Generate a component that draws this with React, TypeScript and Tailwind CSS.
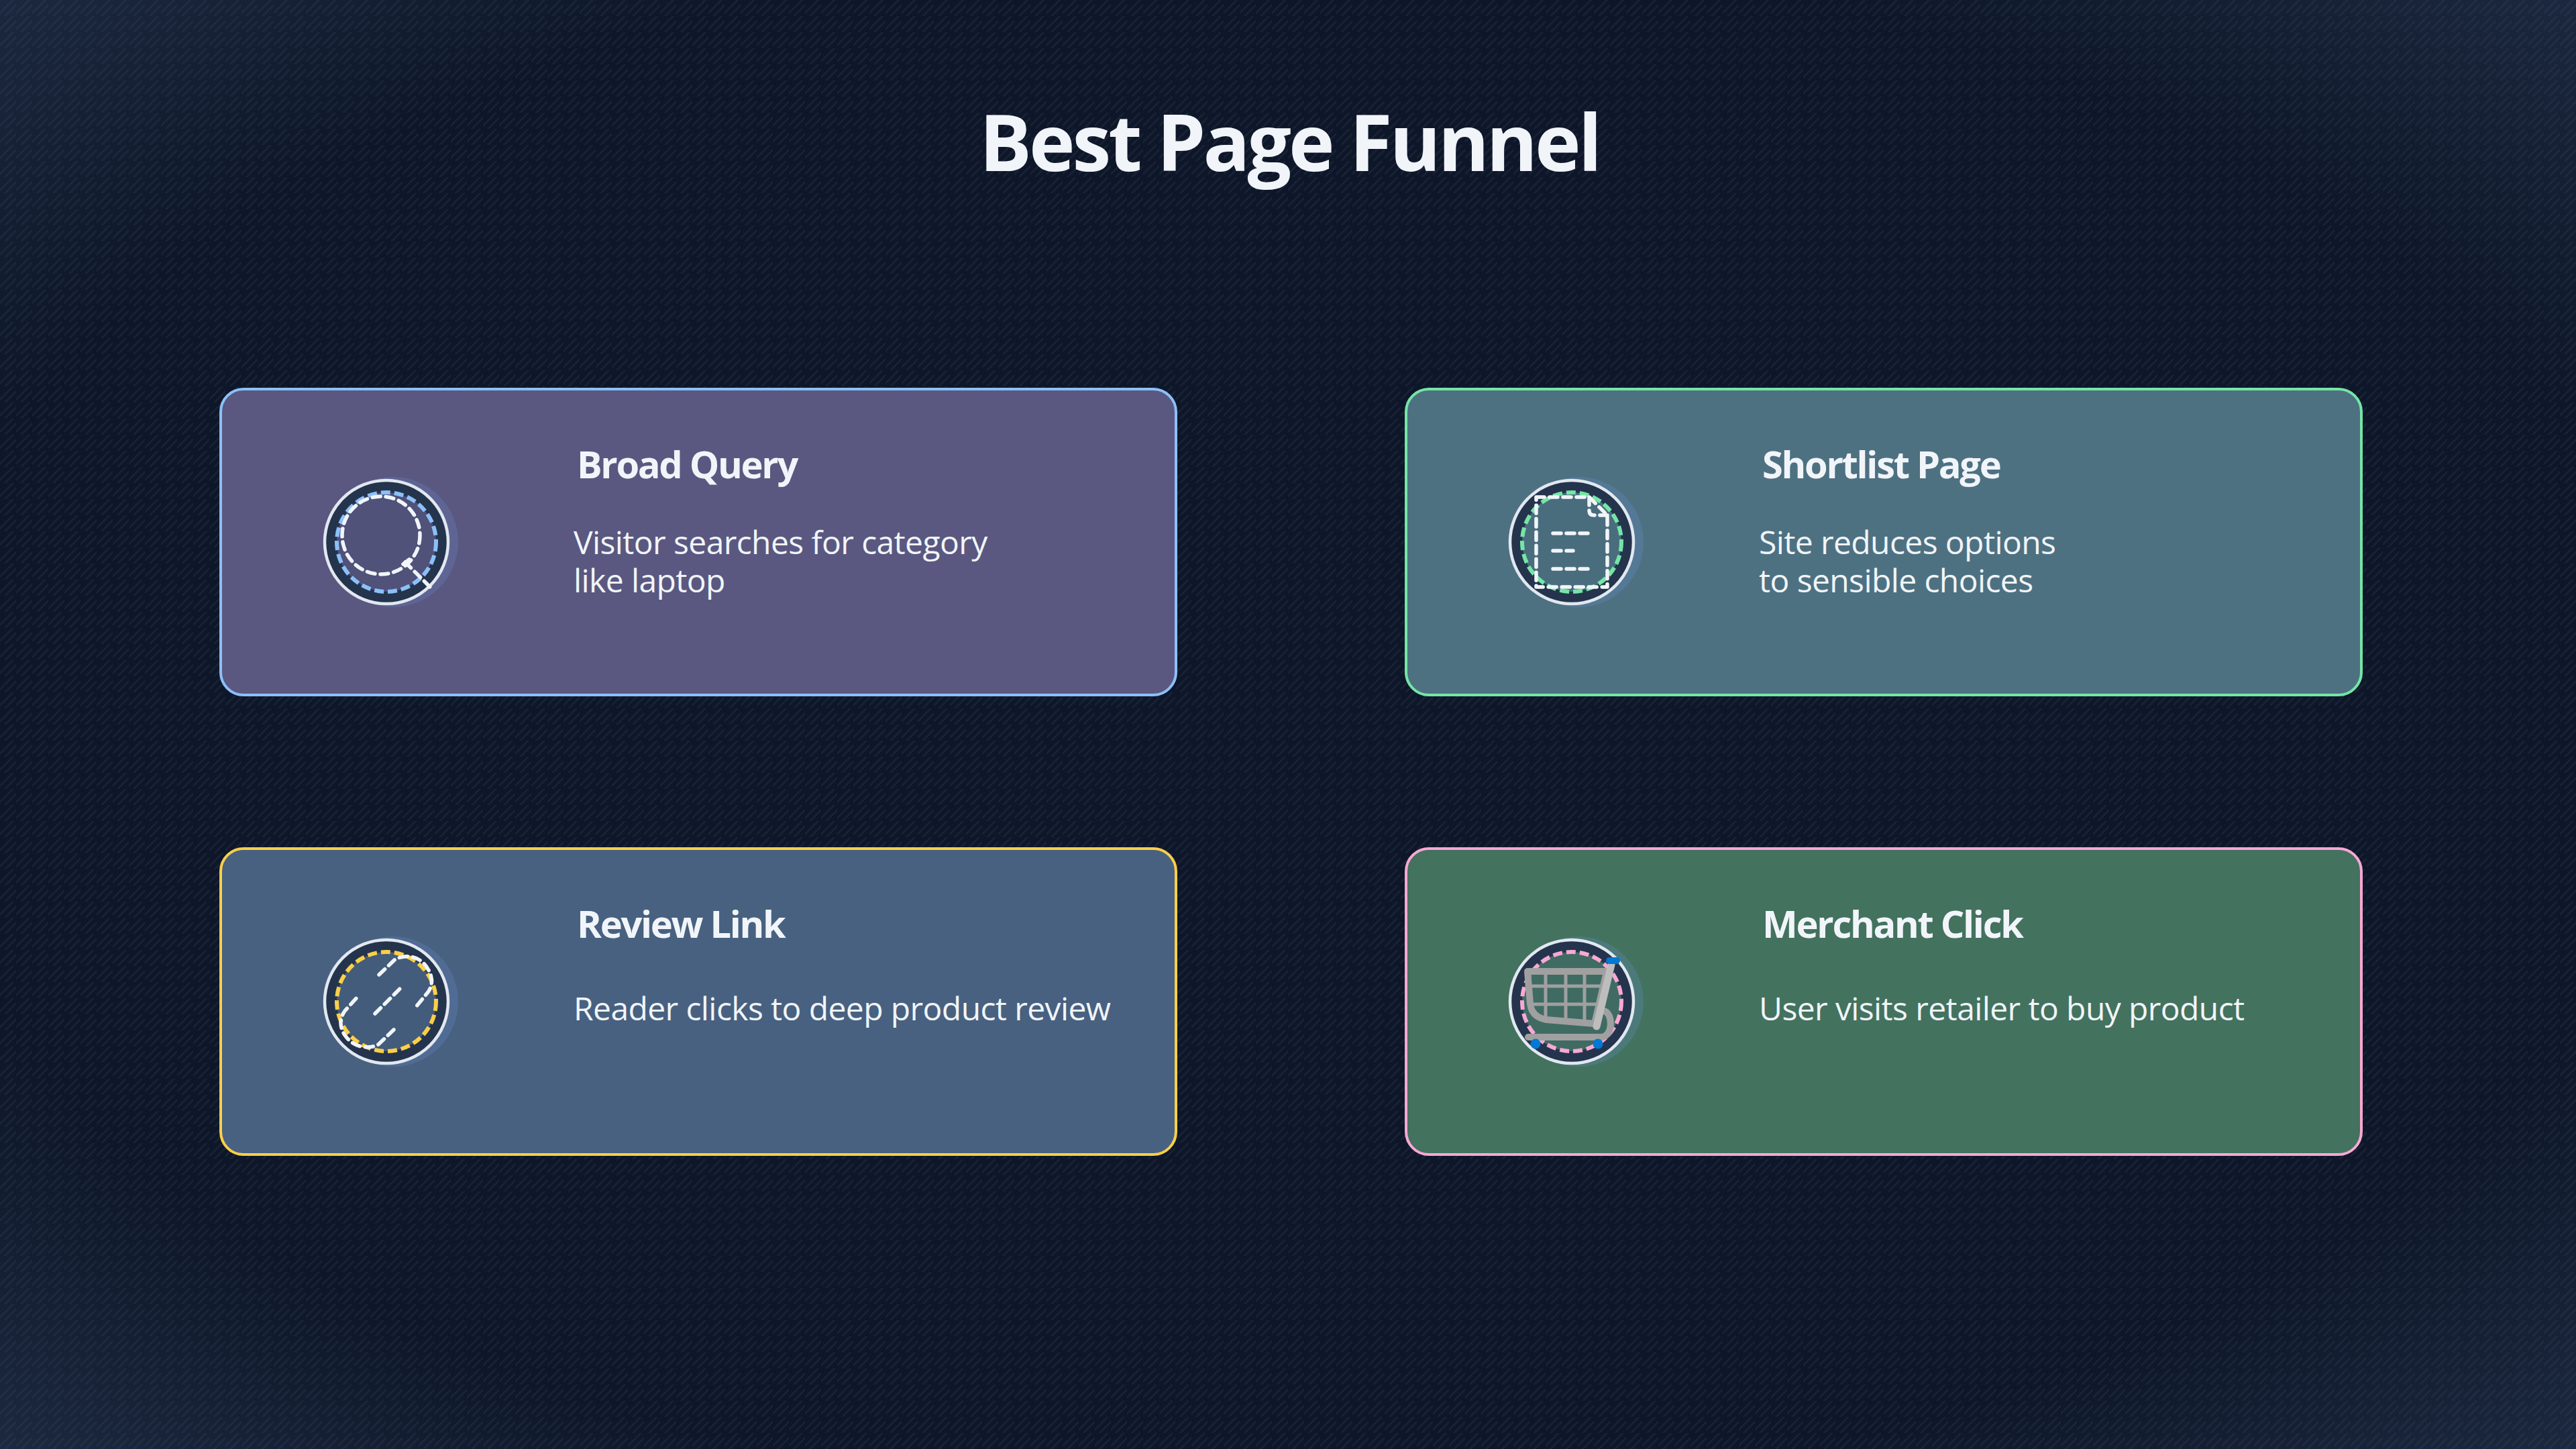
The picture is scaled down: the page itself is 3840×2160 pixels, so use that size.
const INK = '#f1f5f9';

function Badge({ accent, fill, children }: { accent: string; fill: string; children?: React.ReactNode }) {
  return (
    <svg width="230" height="230" viewBox="-115 -115 230 230" className="shrink-0">
      <circle cx="10" cy="0" r="97" fill="#6f96e0" fillOpacity="0.22" />
      <circle r="92" fill="#25344d" stroke="#e2e8f0" strokeWidth="4.5" />
      <circle r="74" fill={fill} stroke={accent} strokeWidth="6" strokeDasharray="14 6" />
      {children}
    </svg>
  );
}

function SearchIcon() {
  return (
    <g fill="none" stroke={INK} strokeWidth="5.5" strokeLinecap="round" strokeDasharray="12 8">
      <circle cx="-8" cy="-10" r="58" />
      <path d="M28 30 L66 68" />
      <path d="M25 33 L34 26" strokeDasharray="none" />
    </g>
  );
}

function DocIcon() {
  return (
    <g fill="none" stroke={INK} strokeWidth="5.5" strokeLinecap="round" strokeLinejoin="round" strokeDasharray="12 8">
      <path d="M-53 -67 H26 L53 -40 V67 H-53 Z" />
      <path d="M26 -67 V-47 Q26 -40 33 -40 H53" />
      <path d="M-28 -13 H27" />
      <path d="M-28 13 H2" />
      <path d="M-28 40 H27" />
    </g>
  );
}

function LinkIcon() {
  return (
    <g fill="none" stroke={INK} strokeWidth="5.5" strokeLinecap="round" strokeDasharray="12 8">
      <path d="M-17 18 L22 -21" />
      <path d="M-11 -40 L12 -62 C28 -72 50 -68 61 -50 C69 -38 70 -25 62 -14 L44 8" />
      <path d="M11 42 L-12 64 C-28 72 -50 68 -62 50 C-70 38 -70 25 -62 14 L-44 -6" />
    </g>
  );
}

function CartIcon() {
  return (
    <g transform="translate(0 3)" fill="none">
      <path d="M-66 -48 H52 L34 30 L-38 24 Q-60 20 -62 0 Z" stroke="#a0a0a0" strokeWidth="10" strokeLinejoin="round" />
      <path d="M-39 -48 V25 M-9 -48 V27 M19 -48 V29 M-64 -26 H47 M-63 1 H41" stroke="#a0a0a0" strokeWidth="5" />
      <path d="M-65 50 H44 C62 50 62 12 47 11" stroke="#a0a0a0" strokeWidth="10" strokeLinecap="round" />
      <path d="M59 -58 L37 34" stroke="#bdbdbd" strokeWidth="11" strokeLinecap="round" />
      <path d="M56 -64 H67" stroke="#0078d4" strokeWidth="10" strokeLinecap="round" />
      <circle cx="-54" cy="60" r="7.5" fill="#0078d4" />
      <circle cx="39" cy="60" r="7.5" fill="#0078d4" />
    </g>
  );
}

const cards = [
  {
    title: 'Broad Query',
    lines: ['Visitor searches for category', 'like laptop'],
    box: 'bg-[#5a5880] border-[#8cc0f9]',
    accent: '#8cc0f9',
    fill: '#50527a',
    icon: <SearchIcon />,
    gap: 'mt-[50px]',
  },
  {
    title: 'Shortlist Page',
    lines: ['Site reduces options', 'to sensible choices'],
    box: 'bg-[#4e7182] border-[#74e6a6]',
    accent: '#74e6a6',
    fill: '#4a6d7e',
    icon: <DocIcon />,
    gap: 'mt-[50px]',
  },
  {
    title: 'Review Link',
    lines: ['Reader clicks to deep product review'],
    box: 'bg-[#486180] border-[#fbcf48]',
    accent: '#fbcf48',
    fill: '#435c7b',
    icon: <LinkIcon />,
    gap: 'mt-[60px]',
  },
  {
    title: 'Merchant Click',
    lines: ['User visits retailer to buy product'],
    box: 'bg-[#43725f] border-[#f9a8d4]',
    accent: '#f9a8d4',
    fill: '#3f6b62',
    icon: <CartIcon />,
    gap: 'mt-[60px]',
  },
];

export default function App() {
  return (
    <div className="relative w-[3840px] h-[2160px] overflow-hidden bg-[#0e1729] font-['Open_Sans',sans-serif]">
      {/* diagonal texture, tiled */}
      <div className="absolute inset-0 bg-[linear-gradient(135deg,transparent_0_37%,rgba(148,163,184,0.08)_37%_44%,transparent_44%_62%,rgba(148,163,184,0.08)_62%_69%,transparent_69%)] bg-[size:24px_24px]" />
      <div className="absolute inset-0 bg-[radial-gradient(ellipse_at_center,transparent_0%,transparent_76%,rgba(70,95,130,0.24)_100%)]" />

      <div className="relative flex flex-col">
        <h1 className="pt-[132px] pl-[1460px] w-fit whitespace-nowrap text-[116px] leading-[156px] font-bold text-[#f1f5f9] tracking-[-4px]">
          Best Page Funnel
        </h1>

        <div className="mt-[290px] ml-[327px] grid grid-cols-[1428px_1428px] gap-x-[339px] gap-y-[225px] w-fit">
          {cards.map((card) => (
            <div key={card.title} className={`flex h-[460px] rounded-[36px] border-4 ${card.box}`}>
              <div className="w-[524px] pl-[130px] flex items-center shrink-0">
                <Badge accent={card.accent} fill={card.fill}>
                  {card.icon}
                </Badge>
              </div>
              <div className="flex flex-col pt-[71px] text-[#f1f5f9]">
                <div className="pl-[5px] text-[56px] leading-[76px] font-bold tracking-[-2.3px]">{card.title}</div>
                <div className={`${card.gap} text-[48px] leading-[57px] tracking-[-0.6px]`}>
                  {card.lines.map((line) => (
                    <div key={line}>{line}</div>
                  ))}
                </div>
              </div>
            </div>
          ))}
        </div>
      </div>
    </div>
  );
}
